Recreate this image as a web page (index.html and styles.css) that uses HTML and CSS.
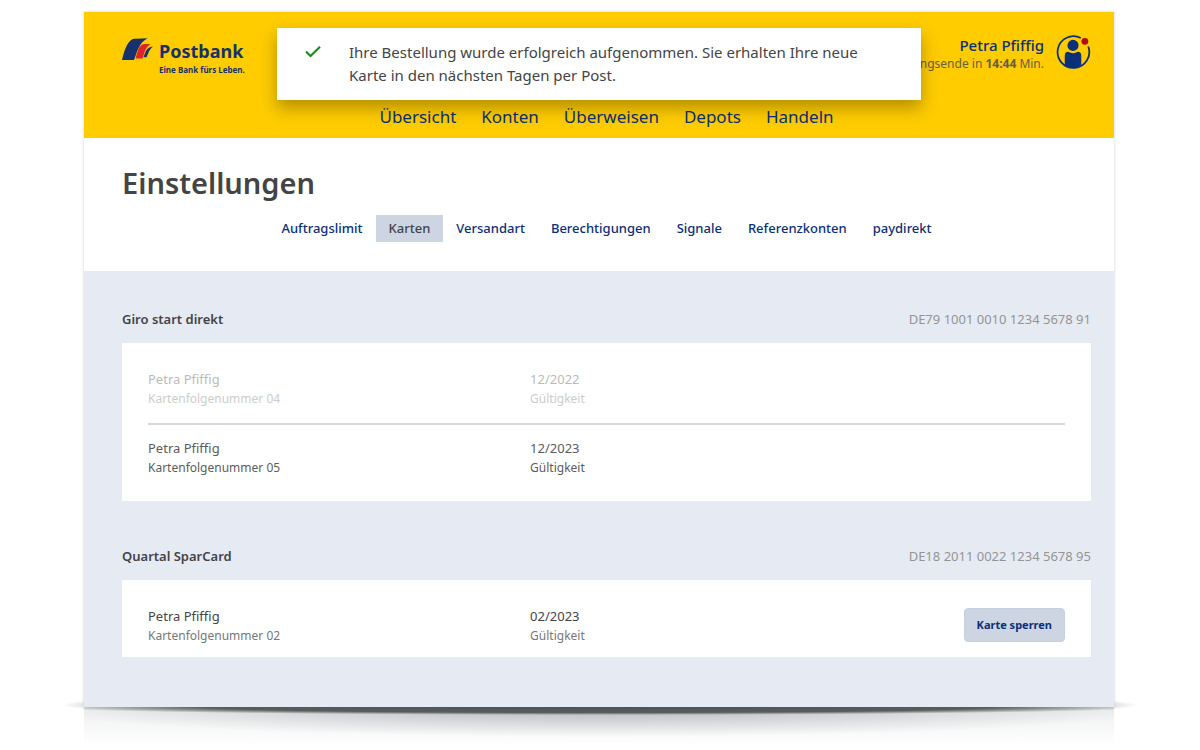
FILE: index.html
```html
<!DOCTYPE html>
<html lang="de">
<head>
<meta charset="utf-8">
<meta name="viewport" content="width=device-width, initial-scale=1">
<title>Postbank – Einstellungen</title>
<link rel="stylesheet" href="styles.css">
</head>
<body>
<div class="stage">
  <div class="page">
    <header class="header">
      <div class="header-top">
        <a class="brand" href="#">
          <svg class="brand-mark" viewBox="0 0 32 24" aria-hidden="true">
            <path fill="#16316b" d="M0 22C2 14 4 7 8 3C10 1 12 .800 14 .800L25.500 .300C17 5 15.500 13 12 22Z"/>
            <path fill="#e2222b" d="M13.500 20.500C15.500 14 16.500 9 19.500 7Q21 6 23 6H28.500C23 9.500 22.500 15 20.500 20.500Z"/>
            <path fill="#16316b" d="M21.500 19.300C23.500 14 24.500 9 31 8.500C27 11.500 26.500 15.500 24.500 19.300Z"/>
          </svg>
          <span class="brand-text">
            <span class="brand-name">Postbank</span>
            <span class="brand-claim">Eine Bank fürs Leben.</span>
          </span>
        </a>
        <div class="account">
          <div class="account-text">
            <div class="account-name">Petra Pfiffig</div>
            <div class="account-session">Sitzungsende in <b>14:44</b> Min.</div>
          </div>
          <button class="account-button" type="button" aria-label="Profil">
            <svg class="account-icon" viewBox="0 0 36 36" aria-hidden="true">
              <path fill="none" stroke="#0b2f78" stroke-width="1.800" d="M25.500 3.600A16.300 16.300 0 1 0 33.200 12.300"/>
              <circle cx="17.500" cy="11.200" r="5.700" fill="#0b2f78"/>
              <path fill="#0b2f78" d="M9 31.500V22Q9 18 12.500 17.800Q17.500 20.800 22.500 17.800Q26 18 26 22V31.500Q17.500 36.500 9 31.500Z"/>
              <circle cx="29.700" cy="7" r="3.500" fill="#b40a14"/>
            </svg>
          </button>
        </div>
      </div>
      <nav class="main-nav" aria-label="Hauptnavigation">
        <a href="#">Übersicht</a>
        <a href="#">Konten</a>
        <a href="#">Überweisen</a>
        <a href="#">Depots</a>
        <a href="#">Handeln</a>
      </nav>
      <div class="toast" role="status">
        <svg class="toast-icon" viewBox="0 0 16 12" aria-hidden="true">
          <path fill="none" stroke="#178a17" stroke-width="2" d="M1 5.500L5.500 10L15 .800"/>
        </svg>
        <p class="toast-text">Ihre Bestellung wurde erfolgreich aufgenommen. Sie erhalten Ihre neue Karte in den nächsten Tagen per Post.</p>
      </div>
    </header>
    <section class="intro">
      <h1 class="title">Einstellungen</h1>
      <nav class="tabs" aria-label="Einstellungen">
        <a href="#">Auftragslimit</a>
        <a href="#" class="active" aria-current="page">Karten</a>
        <a href="#">Versandart</a>
        <a href="#">Berechtigungen</a>
        <a href="#">Signale</a>
        <a href="#">Referenzkonten</a>
        <a href="#">paydirekt</a>
      </nav>
    </section>
    <main class="accounts">
      <section class="group">
        <div class="group-head">
          <h2 class="group-title">Giro start direkt</h2>
          <span class="iban">DE79 1001 0010 1234 5678 91</span>
        </div>
        <div class="panel">
          <div class="card-row expired">
            <div><div class="value">Petra Pfiffig</div><div class="label">Kartenfolgenummer 04</div></div>
            <div><div class="value">12/2022</div><div class="label">Gültigkeit</div></div>
          </div>
          <div class="card-row current">
            <div><div class="value">Petra Pfiffig</div><div class="label">Kartenfolgenummer 05</div></div>
            <div><div class="value">12/2023</div><div class="label">Gültigkeit</div></div>
          </div>
        </div>
      </section>
      <section class="group">
        <div class="group-head">
          <h2 class="group-title">Quartal SparCard</h2>
          <span class="iban">DE18 2011 0022 1234 5678 95</span>
        </div>
        <div class="panel panel-short">
          <div class="card-row">
            <div><div class="value">Petra Pfiffig</div><div class="label">Kartenfolgenummer 02</div></div>
            <div><div class="value">02/2023</div><div class="label">Gültigkeit</div></div>
            <button class="block-button" type="button">Karte sperren</button>
          </div>
        </div>
      </section>
    </main>
  </div>
  <div class="floor"></div>
</div>
</body>
</html>
```
FILE: styles.css
```css
* { box-sizing: border-box; }

body {
  margin: 0;
  background: #fff;
  color: #444;
  font-family: "Noto Sans", "Open Sans", sans-serif;
  font-size: 13px;
  line-height: 20px;
}

a { color: #0b2f78; text-decoration: none; }
button { font-family: inherit; cursor: pointer; }

.stage {
  position: relative;
  padding: 12px 86px 0 84px;
  overflow: hidden;
}

/* soft shadow tips at the lower corners */
.stage::before {
  content: "";
  position: absolute;
  left: 62px;
  right: 62px;
  bottom: 30px;
  height: 30px;
  background: radial-gradient(closest-side, #aaa 0%, #ccc 92%, #fff 100%);
}

.page {
  position: relative;
  box-shadow: 0 0 3px #ccc;
}

.header {
  position: relative;
  background: #fc0;
  padding: 22px 23px 8px 38px;
}

.header-top {
  display: flex;
  justify-content: space-between;
  align-items: flex-start;
  height: 70px;
}

.brand { display: flex; gap: 5px; padding-top: 4px; color: #16316b; }
.brand-mark { width: 32px; height: 24px; }
.brand-text { display: flex; flex-direction: column; font-weight: 700; }
.brand-name { font-size: 18px; line-height: 26px; }
.brand-claim { font-size: 8px; line-height: 12px; }

.account { display: flex; gap: 12px; text-align: right; }
.account-name { color: #0b2f78; font-size: 15px; font-weight: 500; line-height: 22px; }
.account-session { color: #665f45; font-size: 12px; line-height: 16px; }
.account-button { width: 35px; height: 36px; padding: 0; border: 0; background: none; }
.account-icon { display: block; width: 35px; height: 36px; }

.main-nav {
  display: flex;
  justify-content: center;
  gap: 25px;
  font-size: 17px;
  line-height: 26px;
}

.toast {
  position: absolute;
  top: 16px;
  left: 50%;
  transform: translateX(-50%);
  display: flex;
  gap: 28px;
  width: 644px;
  max-width: 90%;
  padding: 13px 48px 13px 28px;
  background: #fff;
  box-shadow: 0 8px 16px rgba(0, 0, 0, 0.3);
}

.toast-icon { flex: none; width: 16px; height: 12px; margin-top: 5px; }
.toast-text { margin: 0; font-size: 15px; line-height: 23px; }

.intro { background: #fff; padding: 26px 23px 29px 38px; }
.title { margin: 0; font-size: 29px; font-weight: 600; line-height: 38px; }

.tabs {
  display: flex;
  justify-content: center;
  margin-top: 13px;
  font-size: 13px;
  font-weight: 500;
  line-height: 27px;
}

.tabs a { padding: 0 13px; }
.tabs .active { background: #cdd5e3; color: #444; }

.accounts {
  display: flex;
  flex-direction: column;
  gap: 45px;
  background: #e6ebf3;
  padding: 38px 23px 50px 38px;
}

.group-head { display: flex; justify-content: space-between; margin-bottom: 13px; }
.group-title { margin: 0; font-size: 13px; font-weight: 600; line-height: 21px; }
.iban { color: #949494; font-size: 13px; }

.panel { background: #fff; padding: 26px 26px 24px; }
.panel-short { padding-bottom: 12px; }

.card-row {
  display: grid;
  grid-template-columns: 5fr 5fr 2fr;
  align-items: start;
}

.value { font-size: 13px; line-height: 20px; }
.label { margin-top: 1px; color: #777; font-size: 12px; line-height: 18px; }
.expired { padding-bottom: 15px; border-bottom: 2px solid #d9d9d9; }
.expired .value { color: #bbb; }
.expired .label { color: #ccc; }
.current { padding-top: 13px; }
.current .value, .current .label { color: #5c5c5c; }

.block-button {
  justify-self: end;
  margin-top: 2px;
  padding: 0 12px;
  border: 1px solid #c6d0de;
  border-radius: 4px;
  background: #cdd5e3;
  color: #0b2f78;
  font-size: 11px;
  font-weight: 700;
  line-height: 32px;
}

.floor {
  position: relative;
  height: 43px;
  background:
    radial-gradient(ellipse 54% 8px at 50% 0, #4e5252 0%, #585c5c 70%, rgba(120, 125, 130, 0) 100%),
    radial-gradient(ellipse 55% 30px at 50% 0, #b4b8bd 0%, rgba(200, 204, 208, 0) 100%),
    linear-gradient(#eeeff0, #fff 90%);
}
```
